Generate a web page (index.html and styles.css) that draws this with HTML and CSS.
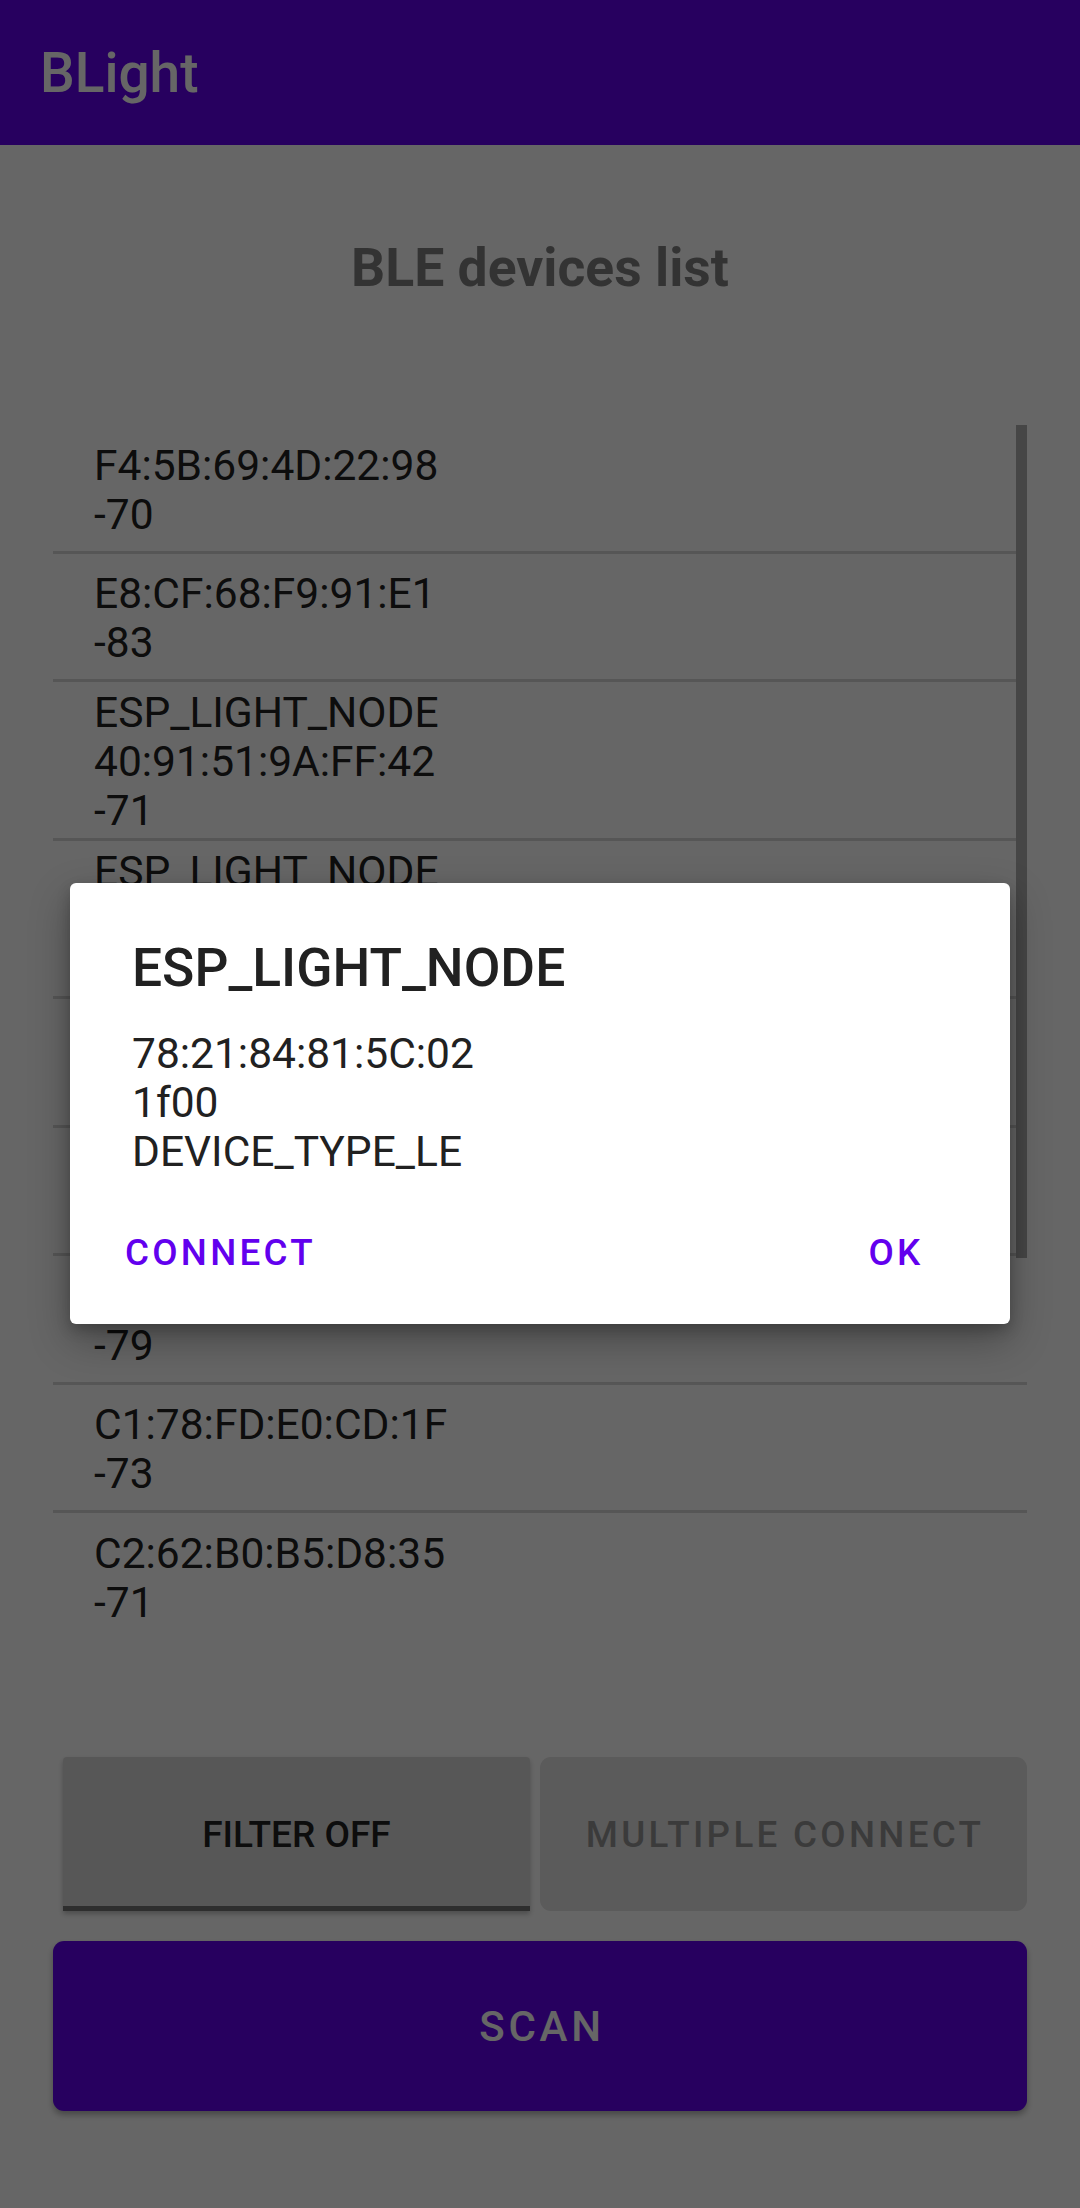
FILE: index.html
```html
<!DOCTYPE html>
<html lang="en">
<head>
<meta charset="utf-8">
<title>BLight</title>
<link rel="stylesheet" href="styles.css">
</head>
<body>
<div class="screen">
  <header class="appbar"><span class="appbar-title">BLight</span></header>
  <main class="content">
    <h1 class="page-title">BLE devices list</h1>
    <div class="list-wrap">
      <ul class="device-list">
        <li class="item"><div class="item-text">F4:5B:69:4D:22:98<br>-70</div></li>
        <li class="item"><div class="item-text">E8:CF:68:F9:91:E1<br>-83</div></li>
        <li class="item"><div class="item-text">ESP_LIGHT_NODE<br>40:91:51:9A:FF:42<br>-71</div></li>
        <li class="item"><div class="item-text">ESP_LIGHT_NODE<br>78:21:84:81:5C:02<br>-66</div></li>
        <li class="item"><div class="item-text">D4:A6:51:0E:7B:33<br>-88</div></li>
        <li class="item"><div class="item-text">5E:12:C7:9A:40:B8<br>-91</div></li>
        <li class="item"><div class="item-text">F9:03:2D:6C:A1:57<br>-79</div></li>
        <li class="item"><div class="item-text">C1:78:FD:E0:CD:1F<br>-73</div></li>
        <li class="item"><div class="item-text">C2:62:B0:B5:D8:35<br>-71</div></li>
      </ul>
      <div class="scrollbar"></div>
    </div>
    <div class="toggle-row">
      <div class="toggle-cell"><button class="btn-filter">FILTER OFF</button></div>
      <div class="toggle-cell"><button class="btn-multi" disabled>MULTIPLE CONNECT</button></div>
    </div>
    <button class="btn-scan">SCAN</button>
  </main>
  <div class="scrim"></div>
  <div class="dialog" role="dialog">
    <div class="dialog-title">ESP_LIGHT_NODE</div>
    <div class="dialog-body">78:21:84:81:5C:02<br>1f00<br>DEVICE_TYPE_LE</div>
    <div class="dialog-actions">
      <button class="text-btn">CONNECT</button>
      <button class="text-btn">OK</button>
    </div>
  </div>
</div>
</body>
</html>
```

FILE: styles.css
```css
* { box-sizing: border-box; }
html, body {
  margin: 0;
  padding: 0;
  background: #ffffff;
  font-family: Roboto, "Noto Sans", "Liberation Sans", sans-serif;
}
.screen {
  position: relative;
  width: 1080px;
  height: 2208px;
  overflow: hidden;
  background: #ffffff;
}
.appbar {
  height: 145px;
  background: #6200ee;
  display: flex;
  align-items: center;
  padding-left: 40px;
}
.appbar-title {
  color: #ffffff;
  font-size: 55px;
  font-weight: 500;
  line-height: 64px;
}
.content {
  display: flex;
  flex-direction: column;
  padding: 0 53px;
}
.page-title {
  margin: 91px 0 0;
  text-align: center;
  font-size: 53.5px;
  font-weight: 700;
  line-height: 63px;
  color: rgba(0, 0, 0, 0.5);
}
.list-wrap {
  position: relative;
  margin-top: 126px;
  height: 1213px;
  overflow: hidden;
}
.device-list {
  list-style: none;
  margin: 0;
  padding: 0;
}
.item {
  min-height: 128.5px;
  padding: 6px 0 2px 41px;
  border-bottom: 3px solid #d6d6d6;
  display: flex;
  align-items: center;
}
.item-text {
  font-size: 42.5px;
  line-height: 49.2px;
  color: #212121;
}
.scrollbar {
  position: absolute;
  top: 0;
  right: 0;
  width: 11px;
  height: 833px;
  background: #afafaf;
}
.toggle-row {
  margin-top: 119px;
  display: grid;
  grid-template-columns: 1fr 1fr;
  height: 154px;
}
.toggle-cell {
  display: flex;
}
.btn-filter {
  flex: 1;
  margin: 0 10px;
  border: none;
  border-bottom: 5px solid #737373;
  border-radius: 4px 4px 0 0;
  background: #dadada;
  box-shadow: 0 3px 5px rgba(0, 0, 0, 0.25);
  font-family: Roboto, "Noto Sans", sans-serif;
  font-size: 37px;
  font-weight: 500;
  color: #212121;
  padding: 6px 0 0;
  letter-spacing: 0;
}
.btn-multi {
  flex: 1;
  border: none;
  border-radius: 11px;
  background: #e3e3e3;
  font-family: Roboto, "Noto Sans", sans-serif;
  font-size: 36.75px;
  font-weight: 500;
  letter-spacing: 3.3px;
  color: #949494;
  padding: 0 0 0 3px;
}
.btn-scan {
  margin-top: 30px;
  height: 170px;
  border: none;
  border-radius: 11px;
  background: #6200ee;
  box-shadow: 0 4px 6px rgba(0, 0, 0, 0.3);
  font-family: Roboto, "Noto Sans", sans-serif;
  font-size: 42px;
  font-weight: 500;
  letter-spacing: 3.7px;
  color: #ffffff;
  padding: 0 0 0 4px;
}
.scrim {
  position: absolute;
  inset: 0;
  background: rgba(0, 0, 0, 0.6);
}
.dialog {
  position: absolute;
  left: 70px;
  top: 883px;
  width: 940px;
  background: #ffffff;
  border-radius: 6px;
  box-shadow: 0 16px 40px rgba(0, 0, 0, 0.3), 0 6px 14px rgba(0, 0, 0, 0.2);
  padding: 54px 0 50px;
}
.dialog-title {
  padding-left: 62px;
  font-size: 53.3px;
  font-weight: 500;
  line-height: 63.3px;
  color: #212121;
}
.dialog-body {
  margin-top: 28.4px;
  padding-left: 62px;
  font-size: 42.5px;
  line-height: 49.2px;
  color: #212121;
}
.dialog-actions {
  margin-top: 54.7px;
  display: flex;
  justify-content: space-between;
  padding: 0 30px 0 34px;
}
.text-btn {
  min-width: 168px;
  padding: 0 21px;
  border: none;
  background: transparent;
  font-family: Roboto, "Noto Sans", sans-serif;
  font-size: 36.75px;
  font-weight: 500;
  letter-spacing: 3.28px;
  line-height: 43px;
  color: #6200ee;
  text-align: center;
}
```
